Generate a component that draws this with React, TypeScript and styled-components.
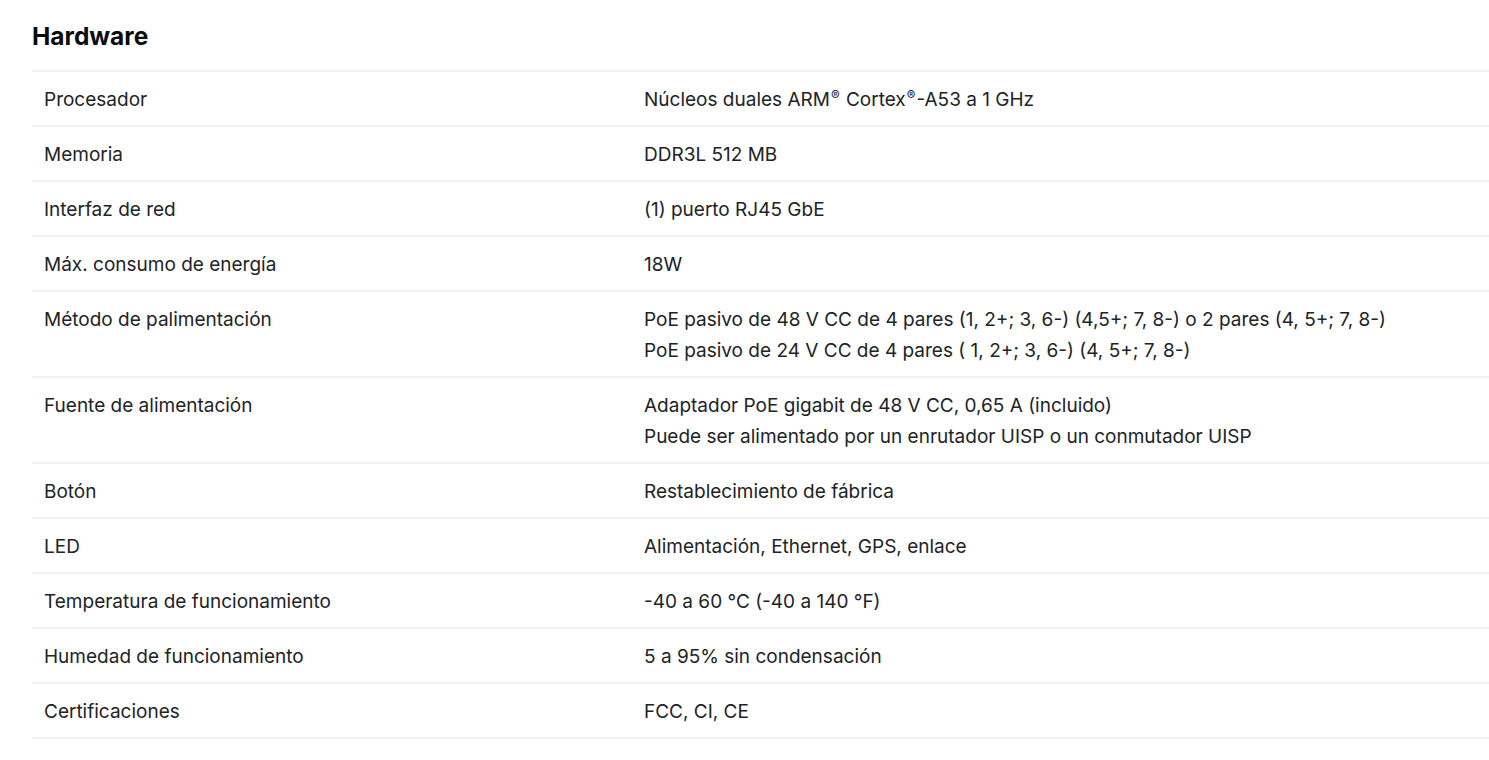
import React from 'react'
import styled, { createGlobalStyle } from 'styled-components'

type Spec = { label: string; values: string[] }

const specs: Spec[] = [
  { label: 'Procesador', values: ['Núcleos duales ARM® Cortex®-A53 a 1 GHz'] },
  { label: 'Memoria', values: ['DDR3L 512 MB'] },
  { label: 'Interfaz de red', values: ['(1) puerto RJ45 GbE'] },
  { label: 'Máx. consumo de energía', values: ['18W'] },
  {
    label: 'Método de palimentación',
    values: [
      'PoE pasivo de 48 V CC de 4 pares (1, 2+; 3, 6-) (4,5+; 7, 8-) o 2 pares (4, 5+; 7, 8-)',
      'PoE pasivo de 24 V CC de 4 pares ( 1, 2+; 3, 6-) (4, 5+; 7, 8-)',
    ],
  },
  {
    label: 'Fuente de alimentación',
    values: [
      'Adaptador PoE gigabit de 48 V CC, 0,65 A (incluido)',
      'Puede ser alimentado por un enrutador UISP o un conmutador UISP',
    ],
  },
  { label: 'Botón', values: ['Restablecimiento de fábrica'] },
  { label: 'LED', values: ['Alimentación, Ethernet, GPS, enlace'] },
  { label: 'Temperatura de funcionamiento', values: ['-40 a 60 °C (-40 a 140 °F)'] },
  { label: 'Humedad de funcionamiento', values: ['5 a 95% sin condensación'] },
  { label: 'Certificaciones', values: ['FCC, CI, CE'] },
]

const GlobalStyle = createGlobalStyle`
  body {
    margin: 0;
    background: #fff;
    font-family: Inter, "Noto Sans", sans-serif;
    color: #212327;
  }
`

// renders ® marks as small raised glyphs
const withMarks = (text: string) =>
  text.split('®').map((part, i, arr) => (
    <React.Fragment key={i}>
      {part}
      {i < arr.length - 1 && <S.Mark>®</S.Mark>}
    </React.Fragment>
  ))

export default function App() {
  return (
    <>
      <GlobalStyle />
      <S.Section>
        <S.Heading>Hardware</S.Heading>
        <S.Table>
          {specs.map((s) => (
            <S.Row key={s.label}>
              <S.Label>{s.label}</S.Label>
              <S.Value>
                {s.values.map((v) => (
                  <div key={v}>{withMarks(v)}</div>
                ))}
              </S.Value>
            </S.Row>
          ))}
        </S.Table>
      </S.Section>
    </>
  )
}

const S = {
  Section: styled.section`
    padding: 21px 0 0 32px;
  `,

  Heading: styled.h2`
    margin: 0 0 19px;
    font-size: 24.5px;
    line-height: 30px;
    font-weight: 700;
    color: #0b0c0e;
  `,

  Table: styled.div`
    border-bottom: 2px solid #f2f2f2;
  `,

  Row: styled.div`
    display: grid;
    grid-template-columns: 600px 1fr;
    border-top: 2px solid #f2f2f2;
    padding: 12px 12px 10px;
    font-size: 19px;
    line-height: 31px;
  `,

  Label: styled.div``,

  Value: styled.div``,

  Mark: styled.sup`
    font-size: 0.68em;
    line-height: 0;
    vertical-align: 0.45em;
    margin: 0 1px;
  `,
}
